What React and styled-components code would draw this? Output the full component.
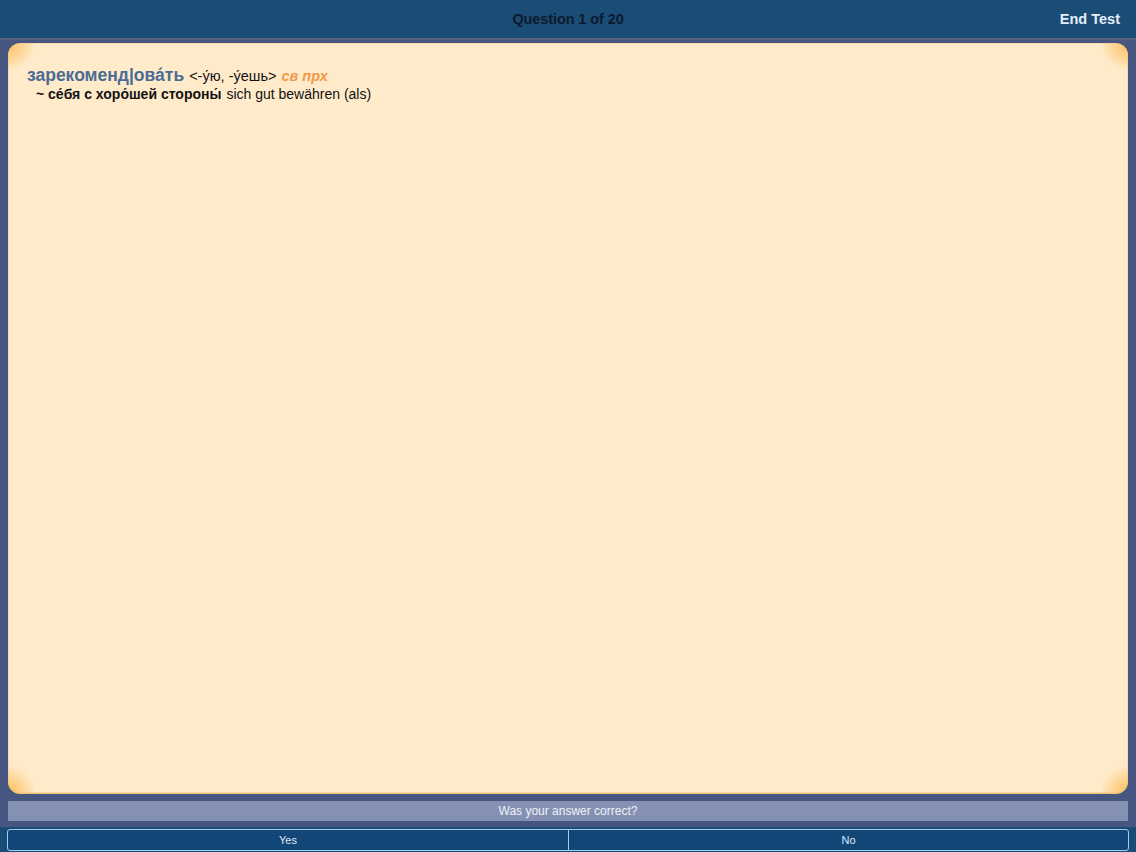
import React from "react";
import styled, { createGlobalStyle } from "styled-components";

const Global = createGlobalStyle`
  html, body { margin: 0; padding: 0; }
  body {
    width: 1136px;
    height: 852px;
    overflow: hidden;
    background: #475581;
    font-family: "Liberation Sans", Arial, sans-serif;
  }
`;

const Page = styled.div`
  width: 1136px;
  height: 852px;
  display: flex;
  flex-direction: column;
  background: #475581;
`;

const Header = styled.header`
  height: 38px;
  flex: none;
  background: #1b4c76;
  border-bottom: 2px solid #56627e;
  display: grid;
  grid-template-columns: 1fr auto 1fr;
  align-items: center;
  padding: 0 16px 0 16px;
`;

const Title = styled.div`
  grid-column: 2;
  font-size: 14.5px;
  font-weight: 700;
  color: #0c1a2e;
  letter-spacing: -0.1px;
`;

const EndButton = styled.button`
  grid-column: 3;
  justify-self: end;
  background: none;
  border: none;
  padding: 0;
  font-family: inherit;
  font-size: 14.5px;
  font-weight: 700;
  color: #e4eef9;
  cursor: pointer;
`;

const Body = styled.main`
  flex: 1;
  display: flex;
  flex-direction: column;
  padding: 3px 8px 0 8px;
`;

const Card = styled.section`
  flex: 1;
  position: relative;
  border-radius: 12px;
  background:
    radial-gradient(circle at 0 0, #fbbd5c 0, rgba(251, 192, 98, 0) 28px),
    radial-gradient(circle at 100% 0, #fbbd5c 0, rgba(251, 192, 98, 0) 28px),
    radial-gradient(circle at 0 100%, #fbbd5c 0, rgba(251, 192, 98, 0) 28px),
    radial-gradient(circle at 100% 100%, #fbbd5c 0, rgba(251, 192, 98, 0) 28px),
    #ffebca;
  box-shadow: 0 1px 0 #f3c070, inset 0 0 0 1px rgba(240, 190, 110, 0.35);
  padding: 22px 19px;
`;

const Entry = styled.div`
  display: flex;
  flex-direction: column;
  gap: 0;
`;

const HeadLine = styled.div`
  display: flex;
  align-items: baseline;
  gap: 5px;
  white-space: nowrap;
`;

const Lemma = styled.span`
  font-size: 17.5px;
  font-weight: 700;
  color: #4b6b95;
`;

const Forms = styled.span`
  font-size: 14.5px;
  color: #111;
`;

const Grammar = styled.span`
  font-size: 14.5px;
  font-weight: 700;
  font-style: italic;
  color: #f29a48;
`;

const Phrase = styled.div`
  display: flex;
  align-items: baseline;
  gap: 5px;
  padding-left: 9px;
  white-space: nowrap;
`;

const PhraseRu = styled.span`
  font-size: 14px;
  font-weight: 700;
  color: #111;
`;

const PhraseDe = styled.span`
  font-size: 14px;
  color: #111;
`;

const Prompt = styled.div`
  margin-top: 8px;
  height: 20px;
  flex: none;
  background: #8491b3;
  display: flex;
  align-items: center;
  justify-content: center;
  font-size: 12px;
  color: #eef1f8;
`;

const Answers = styled.div`
  margin-top: 6px;
  flex: none;
  background: #1a4a76;
  padding: 2px 7px 1px 7px;
  margin-left: -8px;
  margin-right: -8px;
`;

const AnswerRow = styled.div`
  display: grid;
  grid-template-columns: 1fr 1fr;
  height: 22px;
  border: 1.5px solid #9ccdf2;
  border-radius: 3px;
  background: #124677;
  box-sizing: border-box;
`;

const AnswerButton = styled.button`
  background: none;
  border: none;
  border-left: ${(p) => (p.$divided ? "1.5px solid #9ccdf2" : "none")};
  padding: 0;
  font-family: inherit;
  font-size: 11px;
  color: #dfeaf6;
  cursor: pointer;
`;

export default function App() {
  return (
    <>
      <Global />
      <Page>
        <Header>
          <Title>Question 1 of 20</Title>
          <EndButton>End Test</EndButton>
        </Header>
        <Body>
          <Card>
            <Entry>
              <HeadLine>
                <Lemma>{"зарекоменд|ова\u0301ть"}</Lemma>
                <Forms>{"<-у\u0301ю, -у\u0301ешь>"}</Forms>
                <Grammar>св прх</Grammar>
              </HeadLine>
              <Phrase>
                <PhraseRu>{"~ се\u0301бя с хоро\u0301шей стороны\u0301"}</PhraseRu>
                <PhraseDe>sich gut bewähren (als)</PhraseDe>
              </Phrase>
            </Entry>
          </Card>
          <Prompt>Was your answer correct?</Prompt>
          <Answers>
            <AnswerRow>
              <AnswerButton>Yes</AnswerButton>
              <AnswerButton $divided>No</AnswerButton>
            </AnswerRow>
          </Answers>
        </Body>
      </Page>
    </>
  );
}
